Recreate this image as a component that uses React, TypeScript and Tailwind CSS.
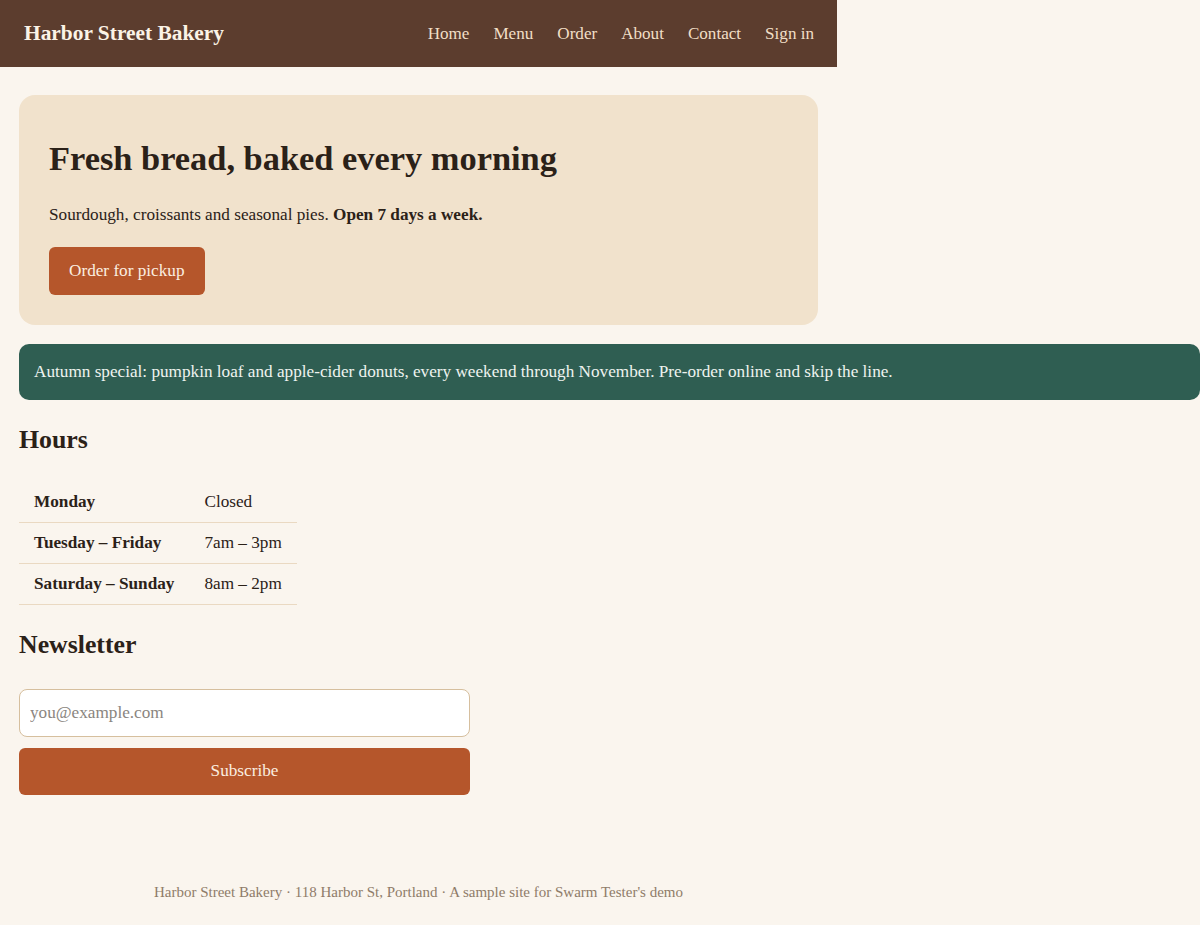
import React from "react";

const serif = { fontFamily: '"Liberation Serif", "Times New Roman", serif' };

const hours = [
  { day: "Monday", time: "Closed" },
  { day: "Tuesday – Friday", time: "7am – 3pm" },
  { day: "Saturday – Sunday", time: "8am – 2pm" },
];

const links = ["Home", "Menu", "Order", "About", "Contact", "Sign in"];

export default function App() {
  return (
    <div className="min-h-[925px] bg-[#faf5ee] text-[#2b2118]" style={serif}>
      <div className="w-[837px]">
        <header className="flex h-[67px] items-center justify-between bg-[#5c3d2e] pl-6 pr-[23px]">
          <span className="text-[21.4px] font-bold text-[#fbf3e6]">Harbor Street Bakery</span>
          <nav className="flex gap-6 text-[17.1px] text-[#f1dfc6]">
            {links.map((l) => (
              <a key={l} href="#">
                {l}
              </a>
            ))}
          </nav>
        </header>

        <main className="px-[19px] pt-[28px]">
          <section className="rounded-2xl bg-[#f1e2cc] px-[30px] pb-[30px] pt-[42px]">
            <h1 className="text-[34.4px] font-bold leading-tight">Fresh bread, baked every morning</h1>
            <p className="mt-[22px] text-[17.2px]">
              Sourdough, croissants and seasonal pies. <strong>Open 7 days a week.</strong>
            </p>
            <button className="mt-[19px] h-[48px] rounded-md bg-[#b5562b] px-[20px] text-[17.2px] text-[#fbeee0]">
              Order for pickup
            </button>
          </section>

          <div className="mt-[19px] flex h-[56px] w-[1181px] items-center rounded-[10px] bg-[#2f5e52] px-[15px] text-[17.2px] text-[#eef3ef]">
            Autumn special: pumpkin loaf and apple-cider donuts, every weekend through November. Pre-order online and
            skip the line.
          </div>

          <h2 className="mt-[21px] text-[25.8px] font-bold">Hours</h2>
          <table className="mt-[22px] border-collapse text-[17.2px]">
            <tbody>
              {hours.map((h) => (
                <tr key={h.day} className="h-[41px] border-b border-[#ead9c2]">
                  <td className="pl-[15px] pr-[30px] font-bold">{h.day}</td>
                  <td className="pr-[15px]">{h.time}</td>
                </tr>
              ))}
            </tbody>
          </table>

          <h2 className="mt-[21px] text-[25.8px] font-bold">Newsletter</h2>
          <div className="mt-[24px] flex w-[451px] flex-col gap-[11px]">
            <input
              type="email"
              placeholder="you@example.com"
              className="h-[48px] rounded-lg border border-[#d6bf9e] bg-white px-[10px] text-[17.2px] placeholder:text-[#8a8580] outline-none"
            />
            <button className="h-[47px] rounded-md bg-[#b5562b] text-[17.2px] text-[#fbeee0]">Subscribe</button>
          </div>
        </main>

        <footer className="mt-[86px] text-center text-[15px] text-[#8f7c69]">
          Harbor Street Bakery · 118 Harbor St, Portland · A sample site for Swarm Tester's demo
        </footer>
      </div>
    </div>
  );
}
